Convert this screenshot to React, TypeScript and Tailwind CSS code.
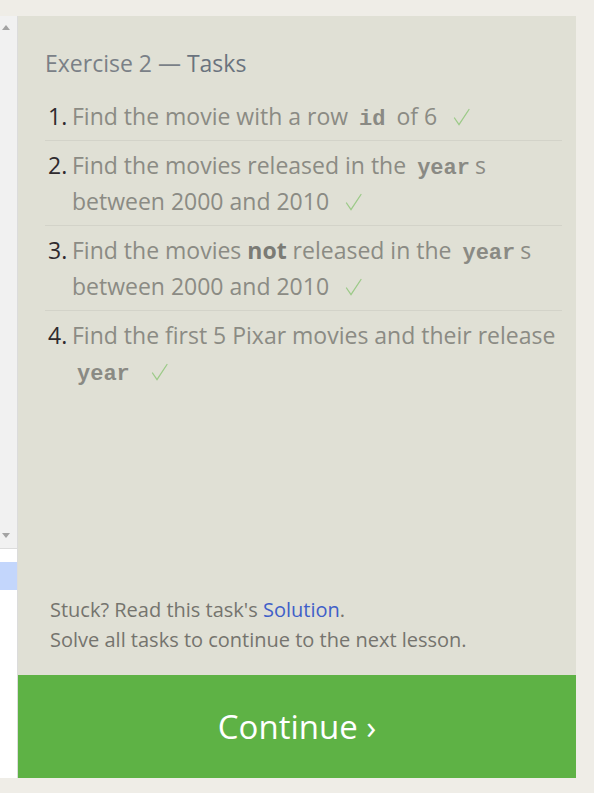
import React from 'react';

const tasks: { n: number; body: React.ReactNode }[] = [
    {
        n: 1,
        body: (
            <>
                Find the movie with a row <Code>id</Code> of 6 <Check />
            </>
        ),
    },
    {
        n: 2,
        body: (
            <>
                Find the movies released in the <Code>year</Code>s between 2000 and 2010 <Check />
            </>
        ),
    },
    {
        n: 3,
        body: (
            <>
                Find the movies <b className="font-bold text-[#7b7b75]">not</b> released in the <Code>year</Code>s between 2000 and 2010 <Check />
            </>
        ),
    },
    {
        n: 4,
        body: (
            <>
                Find the first 5 Pixar movies and their release <Code>year</Code> <Check />
            </>
        ),
    },
];

function Code({ children }: { children: React.ReactNode }) {
    return (
        <code className="px-[5px] font-['Liberation_Mono',monospace] text-[22px] font-bold leading-none text-[#8a8a84]">
            {children}
        </code>
    );
}

function Check() {
    return (
        <svg className="ml-[10px] inline-block align-[-1px]" width="17" height="18" viewBox="0 0 17 18" fill="none">
            <path d="M1.5 10 L6 16.5 L16 1.5" stroke="#9cca88" strokeWidth="1.3" strokeLinecap="round" />
        </svg>
    );
}

export default function App() {
    return (
        <div className="min-h-screen bg-[#efede7] pt-4 font-['Open_Sans',sans-serif]">
            <div className="flex">
                {/* Left scroll strip */}
                <div className="flex h-[762px] w-[18px] flex-col border-r border-[#dcdcdc]">
                    <div className="relative h-[532px] bg-[#f1f1f1]">
                        <div className="absolute left-[2px] top-[9px] h-0 w-0 border-x-[4px] border-b-[5px] border-x-transparent border-b-[#a3a3a3]" />
                        <div className="absolute bottom-[10px] left-[2px] h-0 w-0 border-x-[4px] border-t-[5px] border-x-transparent border-t-[#a3a3a3]" />
                    </div>
                    <div className="flex-1 border-t border-[#dcdcdc] bg-white pt-[13px]">
                        <div className="h-[28px] bg-[#c3d6fc]" />
                    </div>
                </div>

                {/* Main column */}
                <div className="flex w-[558px] flex-col">
                    <div className="flex h-[659px] flex-col bg-[#e0e0d5] pl-[27px] pr-[14px]">
                        <h2 className="pt-[33px] text-[23px] leading-[28px] text-[#7a8087]">
                            Exercise 2 — <span className="text-[#6a737e]">Tasks</span>
                        </h2>
                        <ol className="mt-[15px]">
                            {tasks.map((t, i) => (
                                <li
                                    key={t.n}
                                    className={`flex pb-[6px] pt-[6px] text-[23px] leading-[36px] ${i < tasks.length - 1 ? 'border-b border-[#d3d3c9]' : ''}`}
                                >
                                    <span className="w-[27px] shrink-0 pl-[3px] text-[#2f2a2e]">{t.n}.</span>
                                    <span className="text-[#8b8b84]">{t.body}</span>
                                </li>
                            ))}
                        </ol>
                        <div className="mt-auto pb-[20px] pl-[5px] text-[20px] leading-[30px] text-[#75746e]">
                            <p>
                                Stuck? Read this task's <a className="text-[#3f5fc8]">Solution</a>.
                            </p>
                            <p>Solve all tasks to continue to the next lesson.</p>
                        </div>
                    </div>
                    <button className="flex h-[103px] items-center justify-center bg-[#5eb245] text-[33px] text-white">
                        Continue ›
                    </button>
                </div>
            </div>
        </div>
    );
}
